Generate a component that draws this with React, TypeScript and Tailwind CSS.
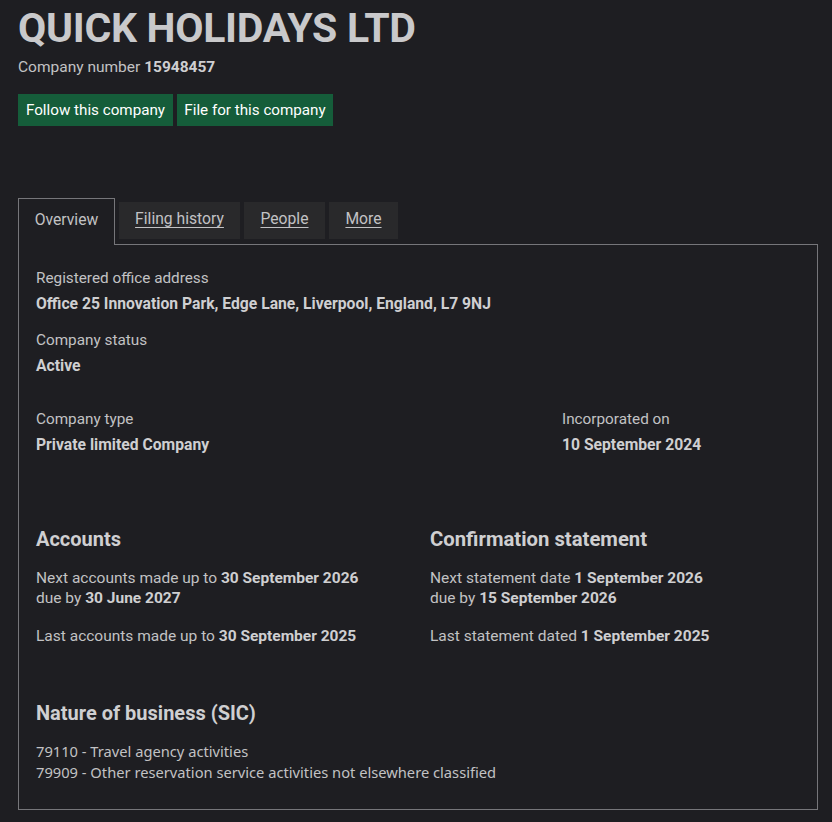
import React from "react";

function Label({ children }: { children: React.ReactNode }) {
  return <div className="text-[15.3px] leading-[25px] text-[#c2c2c4]">{children}</div>;
}
function Value({ children }: { children: React.ReactNode }) {
  return <div className="text-[15.7px] leading-[25px] font-bold text-[#cfcfd1]">{children}</div>;
}

export default function App() {
  return (
    <div className="min-h-screen bg-[#1e1e22] font-['Roboto',sans-serif] text-[#c2c2c4] px-[18px] pb-[12px] pt-[5px]">
      <h1 className="text-[41px] leading-[46px] font-bold text-[#c9c9cb] tracking-[-0.3px]">QUICK HOLIDAYS LTD</h1>
      <p className="mt-[6px] text-[15.5px] leading-[20px]">
        Company number <span className="font-bold text-[#cfcfd1]">15948457</span>
      </p>
      <div className="mt-[17px] flex gap-[4px]">
        <button className="h-[32px] w-[155px] bg-[#155d3a] text-[15.2px] text-white">Follow this company</button>
        <button className="h-[32px] w-[156px] bg-[#155d3a] text-[15.2px] text-white">File for this company</button>
      </div>

      <div className="mt-[72px] w-[800px]">
        <div className="flex items-start">
          <div className="relative z-10 -mb-px h-[47px] w-[97px] border border-b-0 border-[#76767a] bg-[#1e1e22] pt-[10px] text-center text-[15.7px] leading-[21px] text-[#c2c2c4]">
            Overview
          </div>
          <div className="ml-[4px] mt-[4px] h-[37px] w-[121px] bg-[#29292b] pt-[6px] text-center text-[15.7px] leading-[21px] underline underline-offset-[3px]">
            Filing history
          </div>
          <div className="ml-[4px] mt-[4px] h-[37px] w-[81px] bg-[#29292b] pt-[6px] text-center text-[15.7px] leading-[21px] underline underline-offset-[3px]">
            People
          </div>
          <div className="ml-[4px] mt-[4px] h-[37px] w-[69px] bg-[#29292b] pt-[6px] text-center text-[15.7px] leading-[21px] underline underline-offset-[3px]">
            More
          </div>
        </div>

        <div className="border border-[#76767a] pl-[17px] pr-[17px] pt-[21px] pb-[26px]">
          <Label>Registered office address</Label>
          <Value>Office 25 Innovation Park, Edge Lane, Liverpool, England, L7 9NJ</Value>

          <div className="mt-[12px]">
            <Label>Company status</Label>
            <Value>Active</Value>
          </div>

          <div className="mt-[29px] flex">
            <div className="w-[526px]">
              <Label>Company type</Label>
              <Value>Private limited Company</Value>
            </div>
            <div>
              <Label>Incorporated on</Label>
              <Value>10 September 2024</Value>
            </div>
          </div>

          <div className="mt-[70px] flex">
            <div className="w-[394px]">
              <h2 className="text-[20px] leading-[25px] font-bold text-[#cfcfd1]">Accounts</h2>
              <p className="mt-[16px] text-[15.5px] leading-[20px]">
                Next accounts made up to <span className="font-bold text-[#cfcfd1]">30 September 2026</span>
                <br />
                due by <span className="font-bold text-[#cfcfd1]">30 June 2027</span>
              </p>
              <p className="mt-[18px] text-[15.5px] leading-[20px]">
                Last accounts made up to <span className="font-bold text-[#cfcfd1]">30 September 2025</span>
              </p>
            </div>
            <div>
              <h2 className="text-[20.3px] leading-[25px] font-bold text-[#cfcfd1]">Confirmation statement</h2>
              <p className="mt-[16px] text-[15.5px] leading-[20px]">
                Next statement date <span className="font-bold text-[#cfcfd1]">1 September 2026</span>
                <br />
                due by <span className="font-bold text-[#cfcfd1]">15 September 2026</span>
              </p>
              <p className="mt-[18px] text-[15.5px] leading-[20px]">
                Last statement dated <span className="font-bold text-[#cfcfd1]">1 September 2025</span>
              </p>
            </div>
          </div>

          <h2 className="mt-[55px] text-[20px] leading-[25px] font-bold text-[#cfcfd1]">Nature of business (SIC)</h2>
          <div className="mt-[15px] font-['Noto_Sans',sans-serif] text-[14.7px] leading-[21px]">
            <div>79110 - Travel agency activities</div>
            <div>79909 - Other reservation service activities not elsewhere classified</div>
          </div>
        </div>
      </div>
    </div>
  );
}
